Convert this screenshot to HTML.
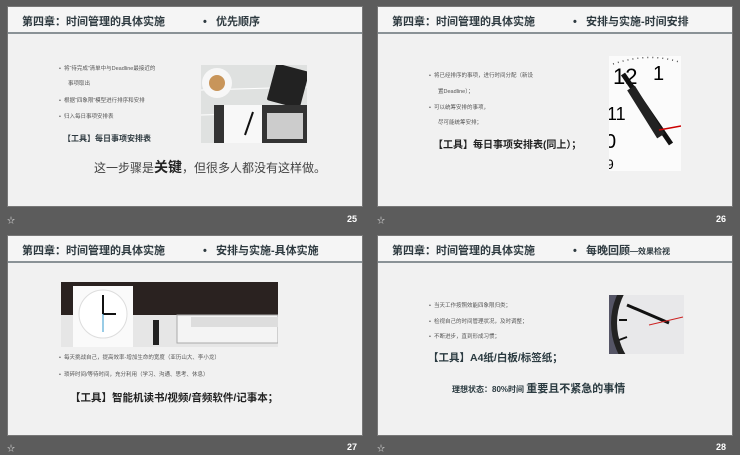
<!DOCTYPE html>
<html><head><meta charset="utf-8"><style>
*{margin:0;padding:0;box-sizing:border-box}
body{width:740px;height:455px;background:#5c5c5c;position:relative;overflow:hidden;font-family:"Liberation Sans","Noto Sans CJK SC",sans-serif;color:#2e3a40}
.s{position:absolute;width:356px;height:201px;background:#f1f1f1;border:1px solid #777}
.hd{position:absolute;left:0;top:0;width:100%;height:27px;background:#f5f5f5;border-bottom:2px solid #8a9296}
.t{position:absolute;top:6px;left:14px;font-size:11px;font-weight:bold;white-space:nowrap}
.t2{position:absolute;top:6px;left:195px;font-size:11px;font-weight:bold;white-space:nowrap}
.a{position:absolute;white-space:nowrap}
.b{font-size:5.5px;color:#555}
.num{position:absolute;color:#fff;font-weight:bold;font-size:9px}
.star{position:absolute;color:#ddd;font-size:8px}
</style></head><body>

<!-- slide 25 -->
<div class="s" style="left:7px;top:6px">
<div class="hd"><div class="t">第四章：时间管理的具体实施</div><div class="t2">•&nbsp;&nbsp;&nbsp;优先顺序</div></div>
<div class="a b" style="left:51px;top:57px">•&nbsp;&nbsp;将“待完成”清单中与Deadline最接近的</div>
<div class="a b" style="left:60px;top:72px">事项取出</div>
<div class="a b" style="left:51px;top:89px">•&nbsp;&nbsp;根据“四象限”模型进行排序和安排</div>
<div class="a b" style="left:51px;top:105px">•&nbsp;&nbsp;归入每日事项安排表</div>
<div class="a" style="left:55px;top:126px;font-size:8px;font-weight:bold">【工具】每日事项安排表</div>
<div class="a" style="left:86px;top:150px;font-size:12px;color:#444">这一步骤是<b style="font-size:14px;color:#222">关键</b>，但很多人都没有这样做。</div>
<svg class="a" style="left:193px;top:58px" width="106" height="78"><rect width="106" height="78" fill="#dfe1e0"/><line x1="0" y1="25" x2="106" y2="22" stroke="#fff"/><line x1="0" y1="50" x2="106" y2="47" stroke="#fff"/><circle cx="16" cy="18" r="15" fill="#f7f7f7"/><circle cx="16" cy="18" r="8" fill="#c8955a"/><rect x="70" y="2" width="34" height="38" rx="2" fill="#222" transform="rotate(15 87 21)"/><rect x="13" y="40" width="93" height="38" fill="#333"/><rect x="23" y="40" width="38" height="38" fill="#f8f8f8"/><rect x="66" y="48" width="36" height="26" fill="#ccc"/><line x1="52" y1="47" x2="44" y2="70" stroke="#111" stroke-width="2"/></svg>
</div>
<div class="star" style="left:7px;top:215px">☆</div><div class="num" style="left:347px;top:214px">25</div>

<!-- slide 26 -->
<div class="s" style="left:377px;top:6px">
<div class="hd"><div class="t">第四章：时间管理的具体实施</div><div class="t2">•&nbsp;&nbsp;&nbsp;安排与实施-时间安排</div></div>
<div class="a b" style="left:51px;top:64px">•&nbsp;&nbsp;将已经排序的事项，进行时间分配（新设</div>
<div class="a b" style="left:60px;top:80px">置Deadline）；</div>
<div class="a b" style="left:51px;top:96px">•&nbsp;&nbsp;可以统筹安排的事项，</div>
<div class="a b" style="left:60px;top:111px">尽可能统筹安排；</div>
<div class="a" style="left:55px;top:129px;font-size:10px;font-weight:bold;color:#222">【工具】每日事项安排表(同上）；</div>
<svg class="a" style="left:231px;top:49px" width="72" height="115"><rect width="72" height="115" fill="#fbfbfb"/><path d="M4 8 Q40 -4 70 6" stroke="#555" stroke-width="1.5" fill="none" stroke-dasharray="1 4"/><text x="4" y="28" font-size="22" font-family="Liberation Sans">12</text><text x="44" y="24" font-size="20" font-family="Liberation Sans">1</text><text x="-2" y="64" font-size="18">11</text><text x="-4" y="92" font-size="20">0</text><text x="-3" y="113" font-size="14">9</text><line x1="14" y1="18" x2="62" y2="88" stroke="#111" stroke-width="5"/><line x1="22" y1="32" x2="52" y2="80" stroke="#222" stroke-width="9"/><line x1="50" y1="74" x2="72" y2="70" stroke="#c00" stroke-width="1.5"/></svg>
</div>
<div class="star" style="left:377px;top:215px">☆</div><div class="num" style="left:716px;top:214px">26</div>

<!-- slide 27 -->
<div class="s" style="left:7px;top:235px">
<div class="hd"><div class="t">第四章：时间管理的具体实施</div><div class="t2">•&nbsp;&nbsp;&nbsp;安排与实施-具体实施</div></div>
<svg class="a" style="left:53px;top:46px" width="217" height="65"><rect width="217" height="65" fill="#e6e6e6"/><rect width="217" height="33" fill="#2a2220"/><rect x="12" y="4" width="60" height="61" fill="#fafafa"/><circle cx="42" cy="32" r="24" fill="#fff" stroke="#ddd"/><line x1="42" y1="32" x2="42" y2="13" stroke="#111" stroke-width="2"/><line x1="42" y1="32" x2="55" y2="32" stroke="#111" stroke-width="2"/><line x1="42" y1="32" x2="42" y2="50" stroke="#39c"/><rect x="92" y="38" width="6" height="25" fill="#222"/><rect x="116" y="33" width="101" height="28" fill="#f4f4f4" stroke="#aaa"/><rect x="130" y="35" width="87" height="10" fill="#ddd"/></svg>
<div class="a b" style="left:51px;top:117px">•&nbsp;&nbsp;每天挑战自己，提高效率-增加生命的宽度（亚历山大、李小龙）</div>
<div class="a b" style="left:51px;top:134px">•&nbsp;&nbsp;琐碎时间/等待时间，充分利用（学习、沟通、思考、休息）</div>
<div class="a" style="left:62px;top:154px;font-size:10.5px;font-weight:bold;color:#222">【工具】智能机读书/视频/音频软件/记事本；</div>
</div>
<div class="star" style="left:7px;top:443px">☆</div><div class="num" style="left:347px;top:442px">27</div>

<!-- slide 28 -->
<div class="s" style="left:377px;top:235px">
<div class="hd"><div class="t">第四章：时间管理的具体实施</div><div class="t2">•&nbsp;&nbsp;&nbsp;每晚回顾<span style="font-size:8px">—效果检视</span></div></div>
<div class="a b" style="left:51px;top:65px">•&nbsp;&nbsp;当天工作按照效能四象限归类；</div>
<div class="a b" style="left:51px;top:81px">•&nbsp;&nbsp;检视自己的时间管理状况，及时调整；</div>
<div class="a b" style="left:51px;top:96px">•&nbsp;&nbsp;不断进步，直到形成习惯；</div>
<div class="a" style="left:50px;top:114px;font-size:10.5px;font-weight:bold;color:#2a3a40">【工具】A4纸/白板/标签纸；</div>
<div class="a" style="left:74px;top:144px;font-size:8px;font-weight:bold;color:#2a3a40">理想状态：80%时间 <span style="font-size:11px">重要且不紧急的事情</span></div>
<svg class="a" style="left:231px;top:59px" width="75" height="59"><rect width="75" height="59" fill="#556"/><circle cx="70" cy="28" r="68" fill="#222"/><circle cx="70" cy="28" r="62" fill="#e8e8ea"/><line x1="18" y1="10" x2="60" y2="28" stroke="#111" stroke-width="3"/><line x1="40" y1="30" x2="74" y2="22" stroke="#c22" stroke-width="1"/><line x1="10" y1="25" x2="18" y2="25" stroke="#111" stroke-width="2"/><line x1="10" y1="45" x2="18" y2="42" stroke="#111" stroke-width="2"/></svg>
</div>
<div class="star" style="left:377px;top:443px">☆</div><div class="num" style="left:716px;top:442px">28</div>

</body></html>
